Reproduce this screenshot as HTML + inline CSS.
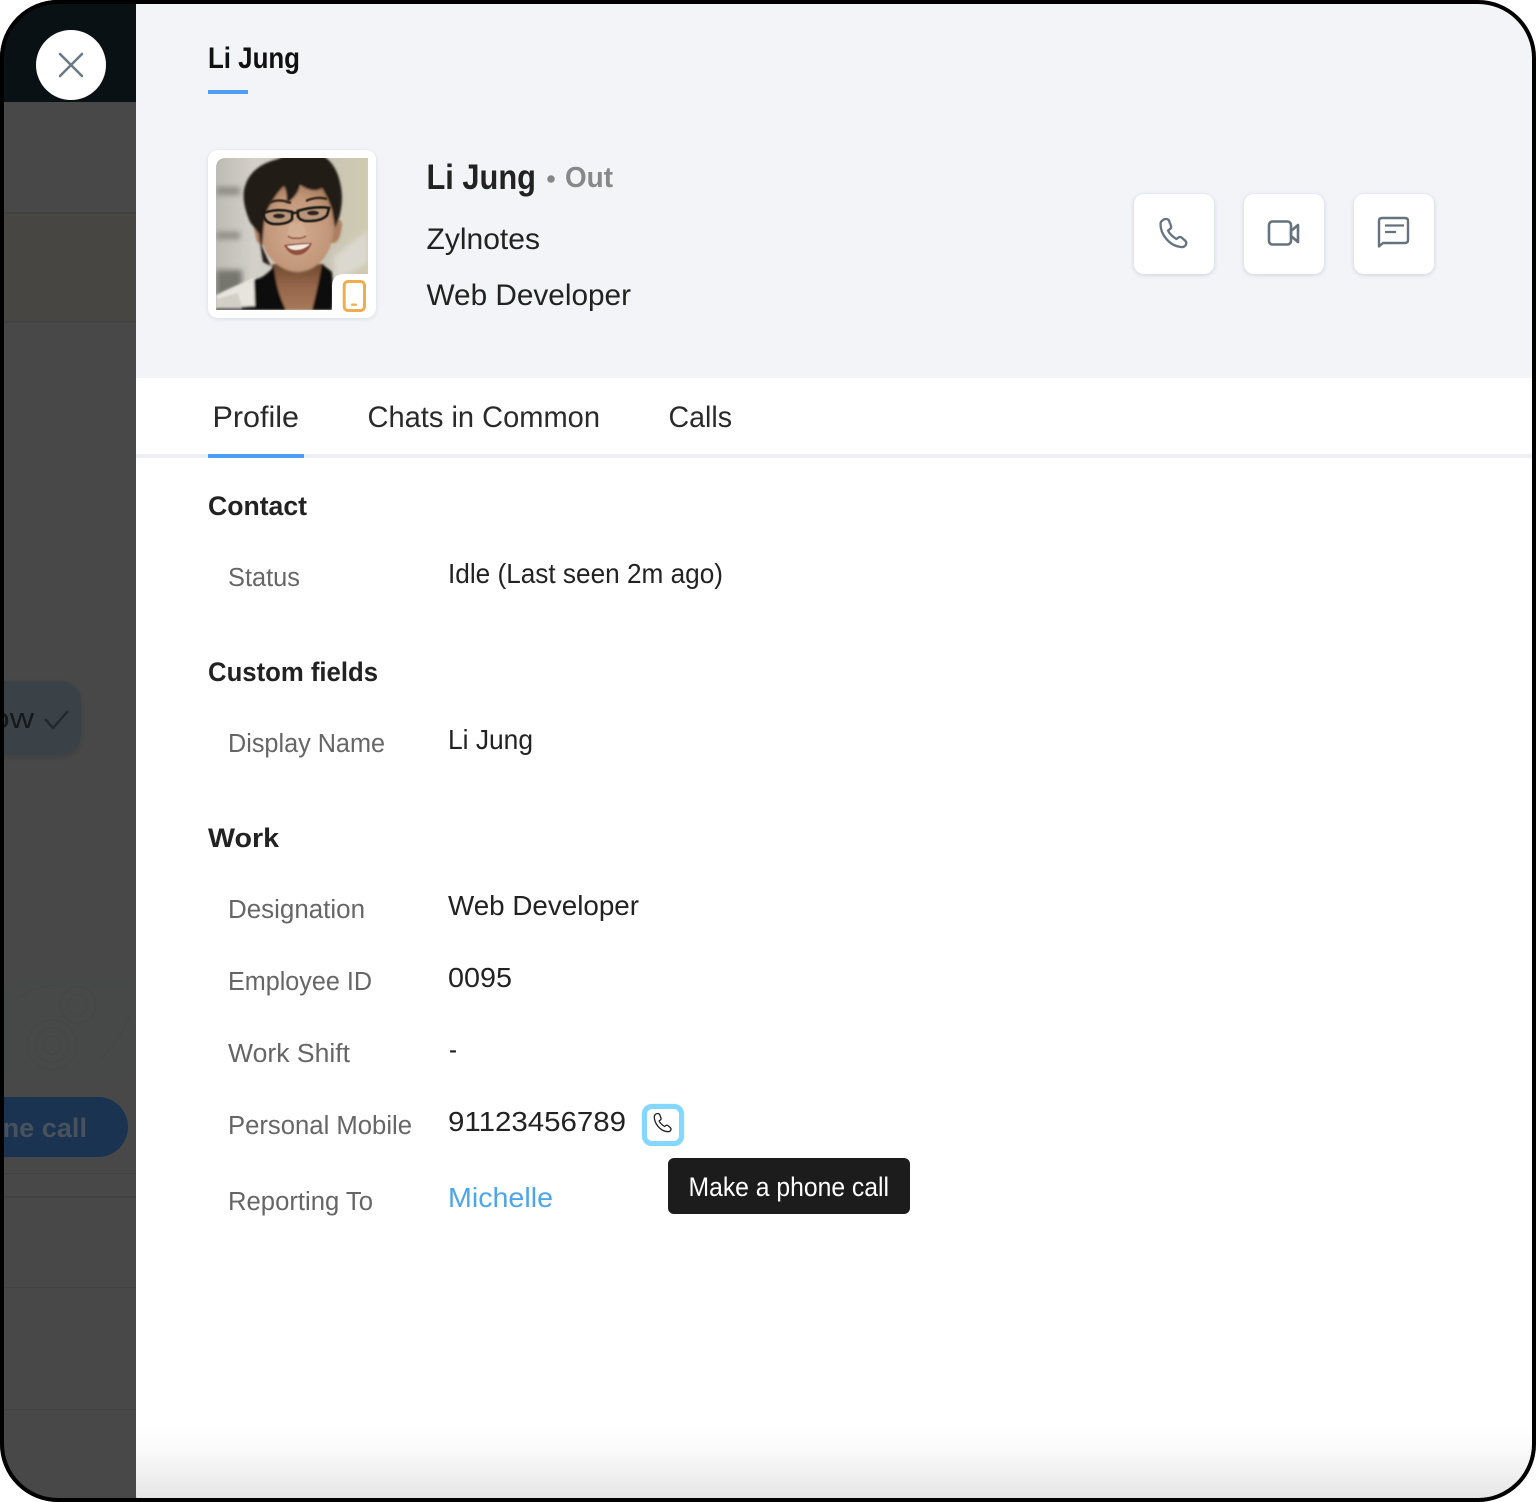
<!DOCTYPE html>
<html>
<head>
<meta charset="utf-8">
<style>
html,body{margin:0;padding:0;background:#fff;width:1536px;height:1502px;overflow:hidden}
div{position:absolute;box-sizing:border-box}
#frame{left:0;top:0;width:1536px;height:1502px;border-radius:58px;overflow:hidden;background:#484848}
svg{position:absolute;left:0;top:0}
text{font-family:"Liberation Sans",sans-serif}
.btn{top:194px;width:80px;height:80px;background:#fff;border-radius:10px;box-shadow:0 1px 5px rgba(60,70,90,.2)}
.l{font-size:25.5px;fill:#666}
.v{font-size:27.5px;fill:#222}
.h{font-size:27px;font-weight:700;fill:#222}
.t{font-size:29.5px;fill:#2a2a2a}
</style>
</head>
<body>
<div id="frame">
  <div style="left:0;top:0;width:136px;height:102px;background:#0a1115"></div>
  <div style="left:0;top:213px;width:136px;height:108px;background:#474642"></div>
  <div style="left:0;top:212px;width:136px;height:2px;background:#414141"></div>
  <div style="left:0;top:321px;width:136px;height:2px;background:#414141"></div>
  <div style="left:0;top:980px;width:136px;height:100px;background:#474848"></div>
  <div style="left:0;top:1173px;width:136px;height:1px;background:#414141"></div>
  <div style="left:0;top:1196px;width:136px;height:2px;background:#414141"></div>
  <div style="left:0;top:1287px;width:136px;height:1px;background:#414141"></div>
  <div style="left:0;top:1409px;width:136px;height:1px;background:#414141"></div>
  <div style="left:-40px;top:681px;width:121px;height:74px;background:#3b4247;border-radius:20px;box-shadow:0 2px 6px rgba(0,0,0,.12)"></div>
  <div style="left:-40px;top:1097px;width:168px;height:60px;background:#1a3350;border-radius:30px"></div>
  <div style="left:136px;top:0;width:1400px;height:1502px;background:linear-gradient(#fff 1425px,#fafafa 1450px,#f0f0f0 1475px,#e6e6e6 1498px);border-radius:0 0 0 6px"></div>
  <div style="left:136px;top:0;width:1400px;height:378px;background:#f2f4f8"></div>
  <div style="left:208px;top:90px;width:40px;height:4px;background:#4f9cf5"></div>
  <div style="left:136px;top:454px;width:1400px;height:4px;background:#eeeff3"></div>
  <div style="left:208px;top:454px;width:96px;height:4px;background:#4f9cf5"></div>
  <div style="left:36px;top:30px;width:70px;height:70px;background:#fff;border-radius:50%"></div>
  <div style="left:208px;top:150px;width:168px;height:168px;background:#fff;border-radius:10px;box-shadow:0 1px 4px rgba(60,70,90,.14)"></div>
  <div class="btn" style="left:1134px"></div>
  <div class="btn" style="left:1244px"></div>
  <div class="btn" style="left:1354px"></div>
  <div style="left:642px;top:1104px;width:42px;height:42px;background:#fff;border:5.5px solid #84d8ff;border-radius:10px;box-shadow:0 0 1px #84d8ff"></div>
  <div style="left:668px;top:1158px;width:242px;height:56px;background:#1c1c1c;border-radius:6px"></div>

  <svg width="1536" height="1502" viewBox="0 0 1536 1502">
    <defs>
      <linearGradient id="bg" x1="0" x2="1" y1="0" y2="0">
        <stop offset="0" stop-color="#bdbbb4"/><stop offset=".25" stop-color="#d2d0c9"/><stop offset=".7" stop-color="#c8c5b6"/><stop offset="1" stop-color="#cfcab0"/>
      </linearGradient>
      <radialGradient id="skin" cx=".5" cy=".55" r=".6">
        <stop offset="0" stop-color="#d3ab90"/><stop offset=".7" stop-color="#c2977a"/><stop offset="1" stop-color="#a67a5c"/>
      </radialGradient>
      <linearGradient id="neck" x1="0" x2="0" y1="0" y2="1">
        <stop offset="0" stop-color="#6f4a32"/><stop offset=".5" stop-color="#96674a"/><stop offset="1" stop-color="#a8785a"/>
      </linearGradient>
      <filter id="b0"><feGaussianBlur stdDeviation=".6"/></filter>
      <filter id="b1"><feGaussianBlur stdDeviation="1.1"/></filter>
      <filter id="b2"><feGaussianBlur stdDeviation="3"/></filter>
      <clipPath id="ph"><path d="M226 158H368V274H344Q332 274 332 286V310H216V168Q216 158 226 158Z"/></clipPath>
      <clipPath id="strip"><rect x="4" y="0" width="132" height="1502"/></clipPath>
    </defs>

    <g fill="none" stroke="#3f4141" stroke-width="1" opacity=".3">
      <circle cx="78" cy="1005" r="10"/><circle cx="78" cy="1005" r="18"/><circle cx="52" cy="1045" r="9"/><circle cx="52" cy="1045" r="17"/><circle cx="52" cy="1045" r="25"/>
      <path d="M15 1000Q35 985 60 985M100 1060Q120 1040 130 1015"/>
    </g>

    <g clip-path="url(#strip)">
      <text x="-9" y="728" font-size="29" fill="#15191c" textLength="43" lengthAdjust="spacingAndGlyphs">ow</text>
      <path d="M45 719l8 9 15-17" fill="none" stroke="#22272b" stroke-width="2.400"/>
      <text x="-14" y="1137" font-size="27" font-weight="700" fill="#47525c" textLength="101" lengthAdjust="spacingAndGlyphs">one call</text>
    </g>

    <path d="M60 54l22 22M82 54L60 76" stroke="#6b7885" stroke-width="2.600" fill="none" stroke-linecap="round"/>

    <g clip-path="url(#ph)">
      <rect x="216" y="158" width="152" height="152" fill="url(#bg)"/>
      <g transform="translate(216 158)">
        <g filter="url(#b2)">
          <rect x="0" y="29" width="24" height="8" fill="#8f8c86"/>
          <rect x="0" y="74" width="24" height="7" fill="#8d8a84"/>
          <rect x="0" y="112" width="26" height="30" fill="#76746e"/>
          <path d="M152 72L118 98V125L152 105Z" fill="#dbd8cf"/>
        </g>
        <g filter="url(#b1)">
          <path d="M56 152V106H108V152Z" fill="url(#neck)"/>
          <path d="M0 152V140Q20 127 44 120Q52 116 58 108Q60 132 70 152Z" fill="#100f0d"/>
          <path d="M96 152Q102 128 106 106L116 114Q118 135 116 152Z" fill="#100f0d"/>
          <path d="M0 150V137Q18 128 38 120L39 148Z" fill="#e7e4dd"/>
          <path d="M0 150V141L22 135L26 150Z" fill="#d2cfc6"/>
          <path d="M38 70Q38 60 44 62L50 84Q42 90 40 80Z" fill="#ad7f61"/>
          <path d="M126 68Q126 60 120 62L114 84Q120 88 124 78Z" fill="#ad7f61"/>
          <path d="M44 50Q42 88 56 102Q68 114 82 114Q98 113 108 100Q120 84 119 50L110 28H52Z" fill="url(#skin)"/>
          <path d="M47 104Q44 86 43 76L34 64Q26 46 28 32Q33 8 62 1L72-4H104Q124 6 126 38Q126 56 119 70L116 52Q112 40 106 30Q98 36 84 27Q82 38 70 46Q72 36 68 28Q60 36 56 44Q50 52 48 66L46 88Q50 98 55 108Z" fill="#241a14"/>
          <path d="M46 44Q38 60 44 72L48 60Z" fill="#241a14"/>
        </g>
        <g filter="url(#b0)">
          <path d="M53 45Q62 40 75 45M90 43Q100 38 111 41" stroke="#3a2a1e" stroke-width="2.600" fill="none"/>
          <path d="M48 55Q62 50 76 54L76 61Q72 66 60 66Q50 66 48 58Z" fill="#b9957c" stroke="#1d1a19" stroke-width="2.800"/>
          <path d="M82 53Q98 48 113 50L111 57Q106 63 92 63Q84 63 82 58Z" fill="#b9957c" stroke="#1d1a19" stroke-width="2.800"/>
          <path d="M76 56Q79 54 82 55" stroke="#1d1a19" stroke-width="2.400" fill="none"/>
          <ellipse cx="63" cy="58" rx="6" ry="2.400" fill="#2d211c"/>
          <ellipse cx="97" cy="55" rx="6" ry="2.400" fill="#2d211c"/>
          <path d="M74 66Q71 74 72 78Q80 83 90 78Q90 72 86 64" fill="#d6b096" opacity=".7"/>
          <path d="M72 78Q76 81 80 80Q85 81 90 78" stroke="#8a5c44" stroke-width="1.600" fill="none"/>
          <path d="M68 87Q82 85 96 85Q91 97 81 97Q73 97 68 87Z" fill="#93503f"/>
          <path d="M71 88Q82 86.500 94 86Q88 92 80 92Q74 92 71 88Z" fill="#f2ebe0"/>
        </g>
      </g>
    </g>
    <rect x="344.200" y="281.500" width="20.300" height="29" rx="4" fill="#fff" stroke="#f0ad4e" stroke-width="3"/>
    <rect x="351" y="303.500" width="6" height="2.200" rx="1" fill="#f0ad4e"/>

    <path d="M1161 222q2-3 5-3t3.500 3l1.500 4q.5 2-1 3l-2 1.500q2.500 5 8.500 8.500l2-1.500q1.500-1 3 0l3.500 3q2 2 1 4-1.500 3-5 2.500-9-1-15-8.500-5.500-6.500-5.500-14.500 0-1.500.5-2z" fill="none" stroke="#66727f" stroke-width="2.300" stroke-linejoin="round"/>
    <rect x="1269" y="221.500" width="22" height="23" rx="3.500" fill="none" stroke="#66727f" stroke-width="2.600"/>
    <path d="M1291 231l7-6v17l-7-6z" fill="none" stroke="#66727f" stroke-width="2.600" stroke-linejoin="round"/>
    <path d="M1379 246.500V221q0-3 3-3h23q3 0 3 3v19q0 3-3 3h-22z" fill="none" stroke="#66727f" stroke-width="2.400" stroke-linejoin="round"/>
    <path d="M1385 225.500h19M1385 232h11" stroke="#66727f" stroke-width="2.200" fill="none"/>
    <path d="M654.500 1115.500q1.300-2 3.200-2t2.300 2l1 2.500q.3 1.300-.6 2l-1.300 1q1.600 3.200 5.500 5.500l1.300-1q1-.6 2 0l2.300 2q1.300 1.300.6 2.600-1 2-3.200 1.600-5.800-.6-9.700-5.500-3.600-4.200-3.600-9.400 0-1 .2-1.300z" fill="none" stroke="#222" stroke-width="1.300" stroke-linejoin="round"/>

    <text x="208" y="68" font-size="29.500" font-weight="700" fill="#111" textLength="92" lengthAdjust="spacingAndGlyphs">Li Jung</text>
    <text x="426.500" y="189" font-size="35.500" font-weight="700" fill="#222" textLength="109.500" lengthAdjust="spacingAndGlyphs">Li Jung</text>
    <circle cx="551" cy="179" r="3.800" fill="#888"/>
    <text x="565" y="187" font-size="29" font-weight="700" fill="#888" textLength="48" lengthAdjust="spacingAndGlyphs">Out</text>
    <text x="426.500" y="249" font-size="30" fill="#222" textLength="113.500" lengthAdjust="spacingAndGlyphs">Zylnotes</text>
    <text x="426.500" y="305" font-size="30" fill="#222" textLength="204.500" lengthAdjust="spacingAndGlyphs">Web Developer</text>

    <text class="t" x="212.500" y="427" textLength="86.500" lengthAdjust="spacingAndGlyphs">Profile</text>
    <text class="t" x="367.500" y="427" textLength="232.500" lengthAdjust="spacingAndGlyphs">Chats in Common</text>
    <text class="t" x="668.500" y="427" textLength="63.500" lengthAdjust="spacingAndGlyphs">Calls</text>

    <text class="h" x="208" y="515" textLength="99" lengthAdjust="spacingAndGlyphs">Contact</text>
    <text class="l" x="228" y="586" textLength="72" lengthAdjust="spacingAndGlyphs">Status</text>
    <text class="v" x="448" y="583" textLength="275" lengthAdjust="spacingAndGlyphs">Idle (Last seen 2m ago)</text>

    <text class="h" x="208" y="681" textLength="170" lengthAdjust="spacingAndGlyphs">Custom fields</text>
    <text class="l" x="228" y="752" textLength="157" lengthAdjust="spacingAndGlyphs">Display Name</text>
    <text class="v" x="448" y="749" textLength="85" lengthAdjust="spacingAndGlyphs">Li Jung</text>

    <text class="h" x="208" y="847" textLength="71" lengthAdjust="spacingAndGlyphs">Work</text>
    <text class="l" x="228" y="918" textLength="137" lengthAdjust="spacingAndGlyphs">Designation</text>
    <text class="v" x="448" y="915" textLength="191" lengthAdjust="spacingAndGlyphs">Web Developer</text>
    <text class="l" x="228" y="990" textLength="144" lengthAdjust="spacingAndGlyphs">Employee ID</text>
    <text class="v" x="448" y="987" textLength="64" lengthAdjust="spacingAndGlyphs">0095</text>
    <text class="l" x="228" y="1062" textLength="122" lengthAdjust="spacingAndGlyphs">Work Shift</text>
    <text class="v" x="449" y="1059" textLength="8" lengthAdjust="spacingAndGlyphs">-</text>
    <text class="l" x="228" y="1134" textLength="184" lengthAdjust="spacingAndGlyphs">Personal Mobile</text>
    <text class="v" x="448" y="1131" textLength="178" lengthAdjust="spacingAndGlyphs">91123456789</text>
    <text class="l" x="228" y="1210" textLength="145" lengthAdjust="spacingAndGlyphs">Reporting To</text>
    <text class="v" x="448" y="1207" style="fill:#4da6e8" textLength="105" lengthAdjust="spacingAndGlyphs">Michelle</text>
    <text x="688.500" y="1196" font-size="27" fill="#fff" textLength="200.500" lengthAdjust="spacingAndGlyphs">Make a phone call</text>
  </svg>
</div>
<div style="left:0;top:0;width:1536px;height:1502px;border:4px solid #000;border-radius:58px;pointer-events:none"></div>
</body>
</html>
